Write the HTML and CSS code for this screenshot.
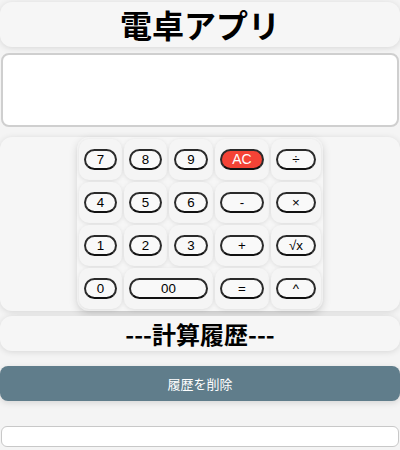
FILE: index.html
```html
<!DOCTYPE html>
<html lang="ja">
<head>
<meta charset="utf-8">
<title>電卓アプリ</title>
<link rel="stylesheet" href="styles.css">
</head>
<body>
<main class="app">
  <h1 class="card title">電卓アプリ</h1>
  <div class="display"></div>
  <section class="card keypad">
    <div class="keys">
      <div class="cell"><button class="key">7</button></div>
      <div class="cell"><button class="key">8</button></div>
      <div class="cell"><button class="key">9</button></div>
      <div class="cell"><button class="key ac">AC</button></div>
      <div class="cell"><button class="key">÷</button></div>
      <div class="cell"><button class="key">4</button></div>
      <div class="cell"><button class="key">5</button></div>
      <div class="cell"><button class="key">6</button></div>
      <div class="cell"><button class="key">-</button></div>
      <div class="cell"><button class="key">×</button></div>
      <div class="cell"><button class="key">1</button></div>
      <div class="cell"><button class="key">2</button></div>
      <div class="cell"><button class="key">3</button></div>
      <div class="cell"><button class="key">+</button></div>
      <div class="cell"><button class="key">√x</button></div>
      <div class="cell"><button class="key">0</button></div>
      <div class="cell span2"><button class="key">00</button></div>
      <div class="cell"><button class="key">=</button></div>
      <div class="cell"><button class="key">^</button></div>
    </div>
  </section>
  <h2 class="card history-title">---計算履歴---</h2>
  <button class="clear">履歴を削除</button>
  <div class="history"></div>
</main>
</body>
</html>
```
FILE: styles.css
```css
html, body {
  margin: 0;
  padding: 0;
  background: #f4f4f4;
  font-family: "Noto Sans CJK JP", "Noto Sans", sans-serif;
}

.app {
  display: flex;
  flex-direction: column;
  padding-top: 2px;
}

.card {
  background: #f6f6f6;
  border-radius: 12px;
  box-shadow: 0 1px 6px rgba(0, 0, 0, 0.12);
}

.title {
  margin: 0;
  height: 45px;
  line-height: 45px;
  font-size: 32px;
  font-weight: bold;
  text-align: center;
  color: #000;
}

.display {
  margin: 6px 1px 0;
  height: 74px;
  box-sizing: border-box;
  background: #fff;
  border: 2px solid #cfcfcf;
  border-radius: 8px;
}

.keypad {
  margin-top: 10px;
  display: flex;
  justify-content: center;
  border-radius: 12px;
}

.keys {
  display: grid;
  grid-template-columns: 43px 43px 44px 54px 50px;
  grid-auto-rows: 41px;
  gap: 2px;
  padding: 2px;
  border-radius: 12px;
  box-shadow: 0 3px 8px rgba(0, 0, 0, 0.14);
}

.cell {
  background: #f5f5f5;
  border-radius: 10px;
  padding: 10px 5px;
  box-sizing: border-box;
  box-shadow: 0 1px 4px rgba(0, 0, 0, 0.1);
}

.span2 {
  grid-column: span 2;
}

.key {
  display: block;
  width: 100%;
  height: 21px;
  margin: 0;
  padding: 0;
  box-sizing: border-box;
  border: 2px solid #2b2b2b;
  border-bottom-color: #111;
  border-radius: 12px;
  background: #f9f9f9;
  font-family: "Liberation Sans", Arial, sans-serif;
  font-size: 13.333px;
  color: #000;
  line-height: 15px;
}

.key.ac {
  background: #f44336;
  color: #fff;
  font-size: 14px;
}

.history-title {
  margin: 5px 0 0;
  height: 35px;
  line-height: 35px;
  font-size: 24px;
  font-weight: bold;
  text-align: center;
  color: #000;
}

.clear {
  margin-top: 15px;
  height: 35px;
  border: none;
  border-radius: 8px;
  background: #607d8b;
  color: #fff;
  font-family: "Noto Sans CJK JP", "Noto Sans", sans-serif;
  font-size: 13px;
  box-shadow: 0 2px 6px rgba(0, 0, 0, 0.12);
}

.history {
  margin: 25px 1px 0;
  height: 21px;
  box-sizing: border-box;
  background: #fff;
  border: 1px solid #c8c8c8;
  border-radius: 6px;
}
```
